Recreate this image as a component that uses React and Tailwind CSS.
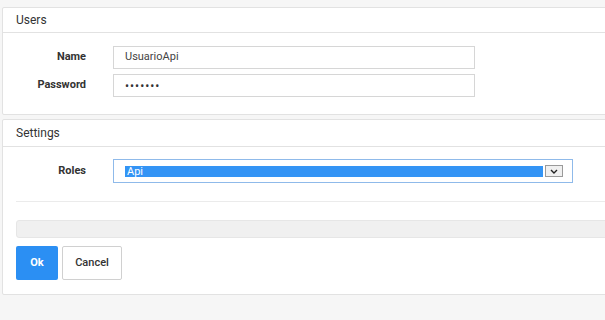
import React from 'react';

const font = { fontFamily: 'Roboto, "Liberation Sans", Arial, sans-serif' };

function Row({ label, children }) {
  return (
    <div className="flex items-center">
      <div className="w-[83px] text-right text-[11px] font-bold text-[#333]">{label}</div>
      <div className="ml-[27px]">{children}</div>
    </div>
  );
}

export default function App() {
  return (
    <div className="w-[605px] h-[320px] overflow-hidden bg-[#f6f6f6] pl-[2px] pt-[7px]" style={font}>
      {/* Users panel */}
      <div className="w-[640px] bg-white border border-[#e2e2e2] rounded-[2px]">
        <div className="h-[25px] flex items-center px-[13px] border-b border-[#e2e2e2] text-[12px] text-[#333]">
          Users
        </div>
        <div className="pt-[13px] pb-[17px] flex flex-col gap-[5px]">
          <Row label="Name">
            <div className="w-[362px] h-[23px] border border-[#d6d6d6] flex items-center px-[11px] text-[11px] text-[#444]">
              UsuarioApi
            </div>
          </Row>
          <Row label="Password">
            <div className="w-[362px] h-[23px] border border-[#d6d6d6] flex items-center px-[11px] text-[12px] text-[#333] tracking-[1px]">
              •••••••
            </div>
          </Row>
        </div>
      </div>

      {/* Settings panel */}
      <div className="mt-[4px] w-[640px] bg-white border border-[#e2e2e2] rounded-[2px]">
        <div className="h-[27px] flex items-center px-[13px] border-b border-[#e2e2e2] text-[12px] text-[#333]">
          Settings
        </div>
        <div className="pt-[12px]">
          <Row label="Roles">
            <div className="w-[460px] h-[24px] border border-[#8fbaea] flex items-center pl-[11px] pr-[9px]">
              <div className="w-[419px] h-[11px] bg-[#3394f5] flex items-center px-[2px] text-[11px] text-white leading-none">
                Api
              </div>
              <div className="ml-[2px] w-[18px] h-[12px] border border-[#9a9a9a] bg-[#f0f0f0] flex items-center justify-center">
                <svg width="8" height="5" viewBox="0 0 8 5">
                  <path d="M1 1 L4 4 L7 1" fill="none" stroke="#222" strokeWidth="1.4" />
                </svg>
              </div>
            </div>
          </Row>
          <div className="ml-[13px] mt-[18px] border-t border-[#ebebeb]" />
          <div className="ml-[13px] mt-[18px] h-[18px] bg-[#f0f0f0] border border-[#e6e6e6] rounded-[3px]" />
          <div className="ml-[13px] mt-[8px] pb-[14px] flex gap-[4px]">
            <button className="w-[42px] h-[34px] bg-[#2b8ff3] text-white text-[11px] font-bold rounded-[2px]">
              Ok
            </button>
            <button className="w-[60px] h-[34px] bg-white border border-[#d0d0d0] text-[#333] text-[11px] font-medium rounded-[2px]">
              Cancel
            </button>
          </div>
        </div>
      </div>
    </div>
  );
}
